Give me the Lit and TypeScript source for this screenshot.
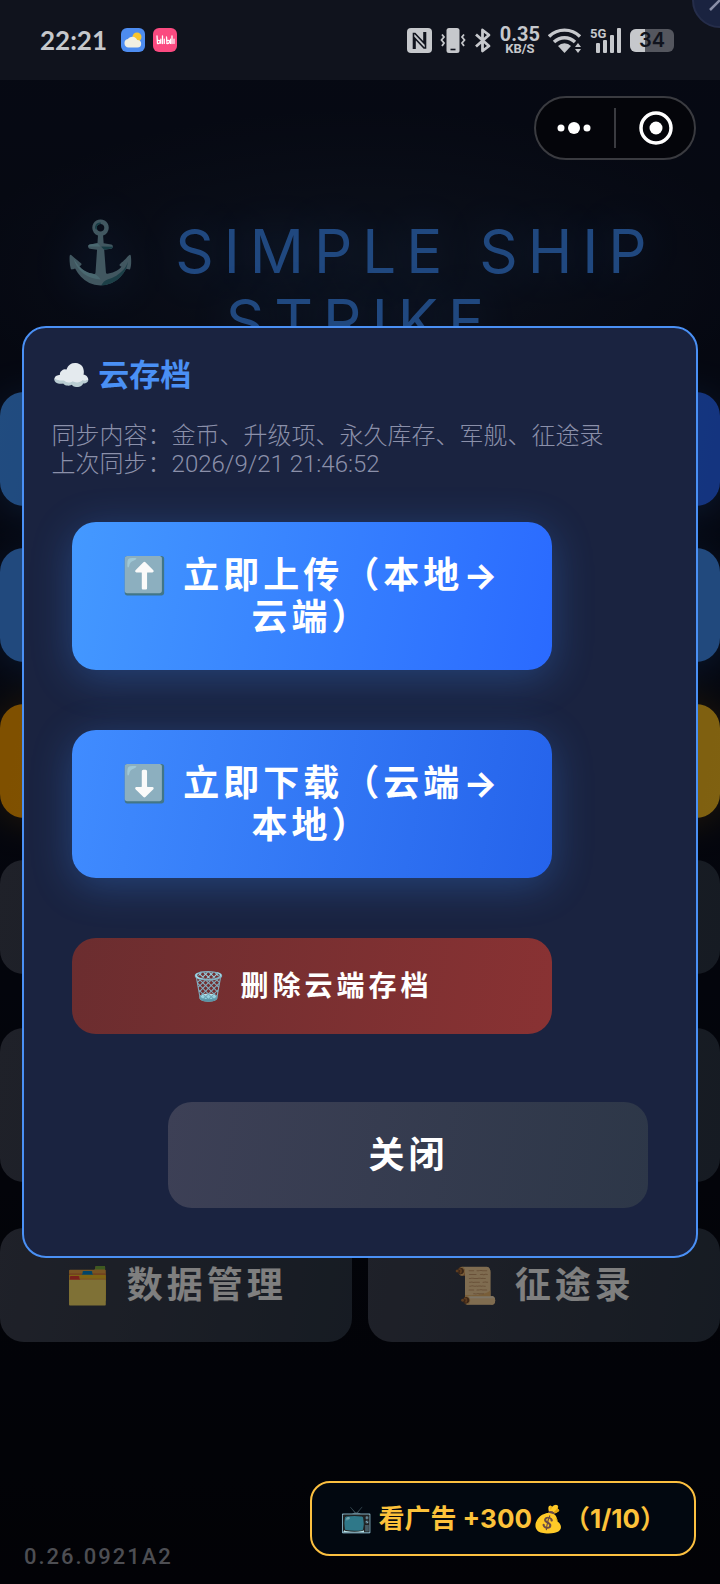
import { LitElement, css, html, svg } from "lit";
import { customElement, property, state } from "lit/decorators.js";

@customElement("status-bar")
export class StatusBar extends LitElement {
  @property()
  time: string = "";

  @property({ attribute: "net-speed" })
  netSpeed: string = "";

  @property({ type: Number })
  battery: number = 0;

  render() {
    return html`
      <div class="bar">
        <div class="side">
          <span class="time">${this.time}</span>
          <svg width="24" height="24" viewBox="0 0 24 24">
            <rect width="24" height="24" rx="6" fill="#4d8cf0" />
            <circle cx="16" cy="9" r="4.5" fill="#f9c52c" />
            <path
              d="M7.5 19.5a4.3 4.3 0 0 1-.6-8.5 5.4 5.4 0 0 1 9.3.9 3.8 3.8 0 0 1 .3 7.6z"
              fill="#f1efe2"
            />
          </svg>
          <svg width="24" height="24" viewBox="0 0 24 24">
            <rect width="24" height="24" rx="6" fill="#fb4a80" />
            <g fill="none" stroke="#fff" stroke-linecap="round">
              <path d="M4 8l.5 7.5M9.5 8v7.5M13.5 9l.5 6.5M19 8v7.5" stroke-width="1.3" />
              <path
                d="M4.5 12.5q3-.5 2.5 1.5t-2.5 1.5M14 12.5q3-.5 2.5 1.5T14 15.5M7.8 11v4.5M11.3 11v4.5M17.5 11v4.5M21 11v4.5"
                stroke-width="1.2"
              />
            </g>
          </svg>
        </div>
        <div class="side right">
          <svg width="25" height="25" viewBox="0 0 25 25">
            <rect width="25" height="25" rx="4" fill="currentColor" />
            <path
              d="M6.5 21V5.5H8L17 15V4M18.5 4v16H17L8 10.500V21"
              fill="none"
              stroke="#10131d"
              stroke-width="1.6"
            />
          </svg>
          <svg width="26" height="25" viewBox="0 0 26 25" fill="none">
            <rect x="6.5" width="13" height="25" rx="2.5" fill="currentColor" />
            <path d="M10.5 21.5h5" stroke="#10131d" stroke-width="1.6" />
            <path
              d="M2 6.5L4 9l-2.500 3L4 15l-2 3M24 6.5L22 9l2.500 3-2.500 3 2 3"
              stroke="currentColor"
              stroke-width="1.8"
            />
          </svg>
          <svg width="18" height="25" viewBox="0 0 18 25" fill="none">
            <path
              d="M2 6.5L15 18l-6.500 5V2L15 7 2 18.500"
              stroke="currentColor"
              stroke-width="2.8"
              stroke-linejoin="round"
            />
          </svg>
          <div class="speed">
            <span class="value">${this.netSpeed}</span>
            <span class="unit">KB/S</span>
          </div>
          <svg width="34" height="25" viewBox="0 0 34 25" fill="none">
            <g stroke="currentColor" stroke-width="3.4">
              <path d="M1 8.5a22 22 0 0 1 31 0" />
              <path d="M6 14a15 15 0 0 1 21 0" />
            </g>
            <path d="M10 18a9 9 0 0 1 13 0L16.5 25z" fill="currentColor" />
            <path d="M27 19l3-4 3 4zM27 21l3 4 3-4z" fill="currentColor" />
          </svg>
          <div class="signal">
            <span class="gen">5G</span>
            <svg width="26" height="25" viewBox="0 0 26 25" fill="currentColor">
              <rect y="15" width="4" height="10" rx="1" />
              <rect x="7" y="12" width="4" height="13" rx="1" />
              <rect x="14" y="7" width="4" height="18" rx="1" />
              <rect x="21" width="4" height="25" rx="1" />
            </svg>
          </div>
          <div class="battery">
            <span class="level" style="width:${this.battery}%"></span>
            <span class="percent">${this.battery}</span>
          </div>
        </div>
      </div>
    `;
  }

  static styles = css`
    :host {
      display: block;
    }
    .bar {
      display: flex;
      align-items: center;
      justify-content: space-between;
      height: 80px;
      padding: 0 46px 0 40px;
      box-sizing: border-box;
      background-color: #10131d;
      color: #c6c8cc;
      font-family: Inter, "Liberation Sans", sans-serif;
    }
    .side {
      display: flex;
      align-items: center;
      gap: 8px;
    }
    .time {
      font-family: Lato, sans-serif;
      font-size: 26px;
      font-weight: 700;
      line-height: 32px;
      margin-right: 6px;
    }
    .speed {
      display: flex;
      flex-direction: column;
      align-items: center;
      font-family: Roboto, sans-serif;
      font-weight: 700;
    }
    .value {
      font-size: 20px;
      line-height: 17px;
    }
    .unit {
      font-size: 13px;
      line-height: 12px;
    }
    .signal {
      position: relative;
      padding-left: 6px;
      height: 25px;
    }
    .gen {
      position: absolute;
      left: 0;
      top: 0;
      font-family: Roboto, sans-serif;
      font-size: 13px;
      font-weight: 700;
      line-height: 11px;
    }
    .battery {
      position: relative;
      width: 44px;
      height: 23px;
      border-radius: 6px;
      overflow: hidden;
      background-color: #54565e;
    }
    .level {
      display: block;
      height: 100%;
      background-color: #c6c8cc;
    }
    .percent {
      position: absolute;
      inset: 0;
      color: #10131d;
      font-size: 20px;
      font-weight: 600;
      line-height: 23px;
      text-align: center;
    }
  `;
}

@customElement("cloud-save-dialog")
export class CloudSaveDialog extends LitElement {
  @property({ attribute: "last-sync" })
  lastSync: string = "";

  private _close = () => {
    this.dispatchEvent(new CustomEvent("close-dialog"));
  };

  render() {
    return html`
      <section class="dialog" role="dialog" aria-labelledby="title">
        <h2 class="title" id="title">☁️ 云存档</h2>
        <p class="info">
          同步内容：金币、升级项、永久库存、军舰、征途录<br />
          上次同步：${this.lastSync}
        </p>
        <div class="actions">
          <button class="btn upload">⬆️ 立即上传（本地→云端）</button>
          <button class="btn download">⬇️ 立即下载（云端→本地）</button>
          <button class="btn delete">🗑️ 删除云端存档</button>
        </div>
        <div class="footer">
          <button class="btn close" @click="${this._close}">关闭</button>
        </div>
      </section>
    `;
  }

  static styles = css`
    :host {
      display: block;
      width: 94%;
    }
    .dialog {
      box-sizing: border-box;
      padding: 28px;
      border: 2px solid #4a90f5;
      border-radius: 24px;
      background-color: #1a2340;
    }
    .title {
      margin: 0 0 26px;
      color: #4a90f5;
      font-size: 31px;
      font-weight: 700;
      line-height: 40px;
    }
    .info {
      margin: 0 0 44px;
      color: #8b90aa;
      font-size: 24px;
      font-weight: 300;
      line-height: 28px;
    }
    .actions {
      display: flex;
      flex-direction: column;
      gap: 60px;
      padding: 0 20px;
    }
    .footer {
      display: flex;
      justify-content: flex-end;
      padding: 68px 20px 20px;
    }
    .btn {
      box-sizing: border-box;
      width: 480px;
      max-width: 100%;
      padding: 32px 48px;
      border: none;
      border-radius: 24px;
      color: #fff;
      font-family: Inter, "Noto Sans CJK SC", sans-serif;
      font-size: 36px;
      font-weight: 700;
      letter-spacing: 4px;
      line-height: 42px;
      cursor: pointer;
    }
    .upload {
      background: linear-gradient(100deg, #4499ff, #2a6aff);
      box-shadow: 0 8px 40px rgba(64, 144, 255, 0.3);
    }
    .download {
      background: linear-gradient(100deg, #408cff, #2563eb);
      box-shadow: 0 8px 40px rgba(64, 144, 255, 0.3);
    }
    .delete {
      padding: 30px 48px;
      background: linear-gradient(100deg, #6b2d2f, #893233);
      font-size: 28px;
      line-height: 36px;
    }
    .close {
      background: linear-gradient(100deg, #3d4056, #2d3748);
    }
  `;
}

@customElement("app-root")
export class AppRoot extends LitElement {
  @state()
  private _dialogOpen: boolean = true;

  private _menu = [
    { kind: "primary", name: "开始" },
    { kind: "flat", name: "继续" },
    { kind: "gold", name: "商店" },
    { kind: "plain", name: "升级" },
    { kind: "plain tall", name: "军舰" },
  ];

  private _closeDialog = () => {
    this._dialogOpen = false;
  };

  private _capsule = () => html`
    <div class="capsule">
      <button class="capsule-btn" aria-label="更多">
        <svg width="36" height="36" viewBox="0 0 36 36" fill="#fff">
          ${[
            [4, 3.5],
            [17, 6],
            [30, 3.5],
          ].map(([x, r]) => svg`<circle cx=${x} cy="18" r=${r} />`)}
        </svg>
      </button>
      <span class="divider"></span>
      <button class="capsule-btn" aria-label="退出">
        <svg width="36" height="36" viewBox="0 0 36 36">
          <circle cx="19" cy="18" r="15" fill="none" stroke="#fff" stroke-width="3.5" />
          <circle cx="19" cy="18" r="6.5" fill="#fff" />
        </svg>
      </button>
    </div>
  `;

  render() {
    return html`
      <div class="page">
        <status-bar class="status" time="22:21" net-speed="0.35" battery="34"></status-bar>
        <header class="top">${this._capsule()}</header>
        <h1 class="title">⚓ SIMPLE SHIP STRIKE</h1>
        <nav class="menu">
          ${this._menu.map(
            (m) => html`<button class="item ${m.kind}" aria-label="${m.name}"></button>`
          )}
          <div class="row">
            <button class="item plain">🗂️ 数据管理</button>
            <button class="item plain">📜 征途录</button>
          </div>
        </nav>
        <footer class="bottom">
          <span class="version">0.26.0921A2</span>
          <button class="ad">📺 看广告 +300💰（1/10）</button>
        </footer>
        ${this._dialogOpen
          ? html`<div class="overlay">
              <cloud-save-dialog
                last-sync="2026/9/21 21:46:52"
                @close-dialog="${this._closeDialog}"
              ></cloud-save-dialog>
            </div>`
          : null}
        <button class="corner" aria-label="关闭" @click="${this._closeDialog}">
          <svg width="24" height="24" viewBox="0 0 24 24">
            <path d="M2 22L22 2M2 2l20 20" stroke="#8a8fa8" stroke-width="2.5" />
          </svg>
        </button>
      </div>
    `;
  }

  static styles = css`
    :host {
      display: block;
      font-family: Roboto, "Noto Sans CJK SC", sans-serif;
    }
    .page {
      position: relative;
      display: flex;
      flex-direction: column;
      min-height: 100vh;
      overflow: hidden;
      background:
        radial-gradient(ellipse 400px 160px at 50% 270px, #182238, transparent),
        linear-gradient(#0e1428, #080c1c 50%, #04050c);
    }
    .status,
    .top,
    .bottom {
      position: relative;
      z-index: 2;
    }
    .top {
      display: flex;
      justify-content: flex-end;
      padding: 16px 24px 0;
    }
    .capsule {
      display: flex;
      align-items: center;
      box-sizing: border-box;
      width: 162px;
      height: 64px;
      border: 2px solid #3a3b40;
      border-radius: 32px;
      background-color: #04050a;
    }
    .capsule-btn {
      flex: 1;
      display: flex;
      justify-content: center;
      padding: 0;
      border: none;
      background: none;
      cursor: pointer;
    }
    .divider {
      width: 2px;
      height: 40px;
      background-color: #3a3b40;
    }
    .title {
      margin: 56px 30px 36px;
      color: #4090ff;
      font-family: Inter, sans-serif;
      font-size: 60px;
      font-weight: 400;
      letter-spacing: 10px;
      line-height: 70px;
      text-align: center;
      text-shadow: 0 0 40px rgba(64, 144, 255, 0.3);
    }
    .menu {
      display: flex;
      flex-direction: column;
      gap: 42px;
    }
    .row {
      display: grid;
      grid-template-columns: 1fr 1fr;
      gap: 16px;
    }
    .item {
      min-height: 114px;
      padding: 0;
      border: none;
      border-radius: 24px;
      color: #fff;
      font-family: Inter, "Noto Sans CJK SC", sans-serif;
      font-size: 36px;
      font-weight: 700;
      letter-spacing: 4px;
      line-height: 42px;
      cursor: pointer;
    }
    .primary {
      background: linear-gradient(100deg, #4298ff, #2868ff);
      box-shadow: 0 8px 40px rgba(64, 144, 255, 0.3);
    }
    .flat {
      background: #4292fa;
      box-shadow: 0 8px 40px rgba(64, 144, 255, 0.3);
    }
    .gold {
      background: linear-gradient(100deg, #ffa000, #ffc222);
      box-shadow: 0 0 40px rgba(255, 170, 0, 0.3);
    }
    .plain {
      background: linear-gradient(100deg, #3e4252, #2d3746);
    }
    .tall {
      min-height: 154px;
      margin: 12px 0 4px;
    }
    .bottom {
      display: flex;
      align-items: flex-end;
      justify-content: space-between;
      margin-top: auto;
      padding: 0 24px 28px;
    }
    .version {
      height: 14px;
      color: #4d4e53;
      font-size: 22px;
      font-weight: 500;
      letter-spacing: 2px;
      line-height: 30px;
    }
    .ad {
      padding: 18px 28px;
      border: 2px solid #fcc040;
      border-radius: 20px;
      background-color: #020810;
      color: #fcc23a;
      font-family: Inter, "Noto Sans CJK SC", sans-serif;
      font-size: 26px;
      font-weight: 700;
      line-height: 35px;
      cursor: pointer;
    }
    .overlay {
      position: absolute;
      inset: 0;
      z-index: 1;
      display: flex;
      align-items: center;
      justify-content: center;
      background-color: rgba(0, 0, 0, 0.5);
    }
    .corner {
      position: absolute;
      top: -28px;
      right: -28px;
      z-index: 3;
      display: flex;
      align-items: center;
      justify-content: center;
      box-sizing: border-box;
      width: 56px;
      height: 56px;
      padding: 0;
      border: 2px solid #252d4a;
      border-radius: 50%;
      background-color: #1a2340;
    }
  `;
}
